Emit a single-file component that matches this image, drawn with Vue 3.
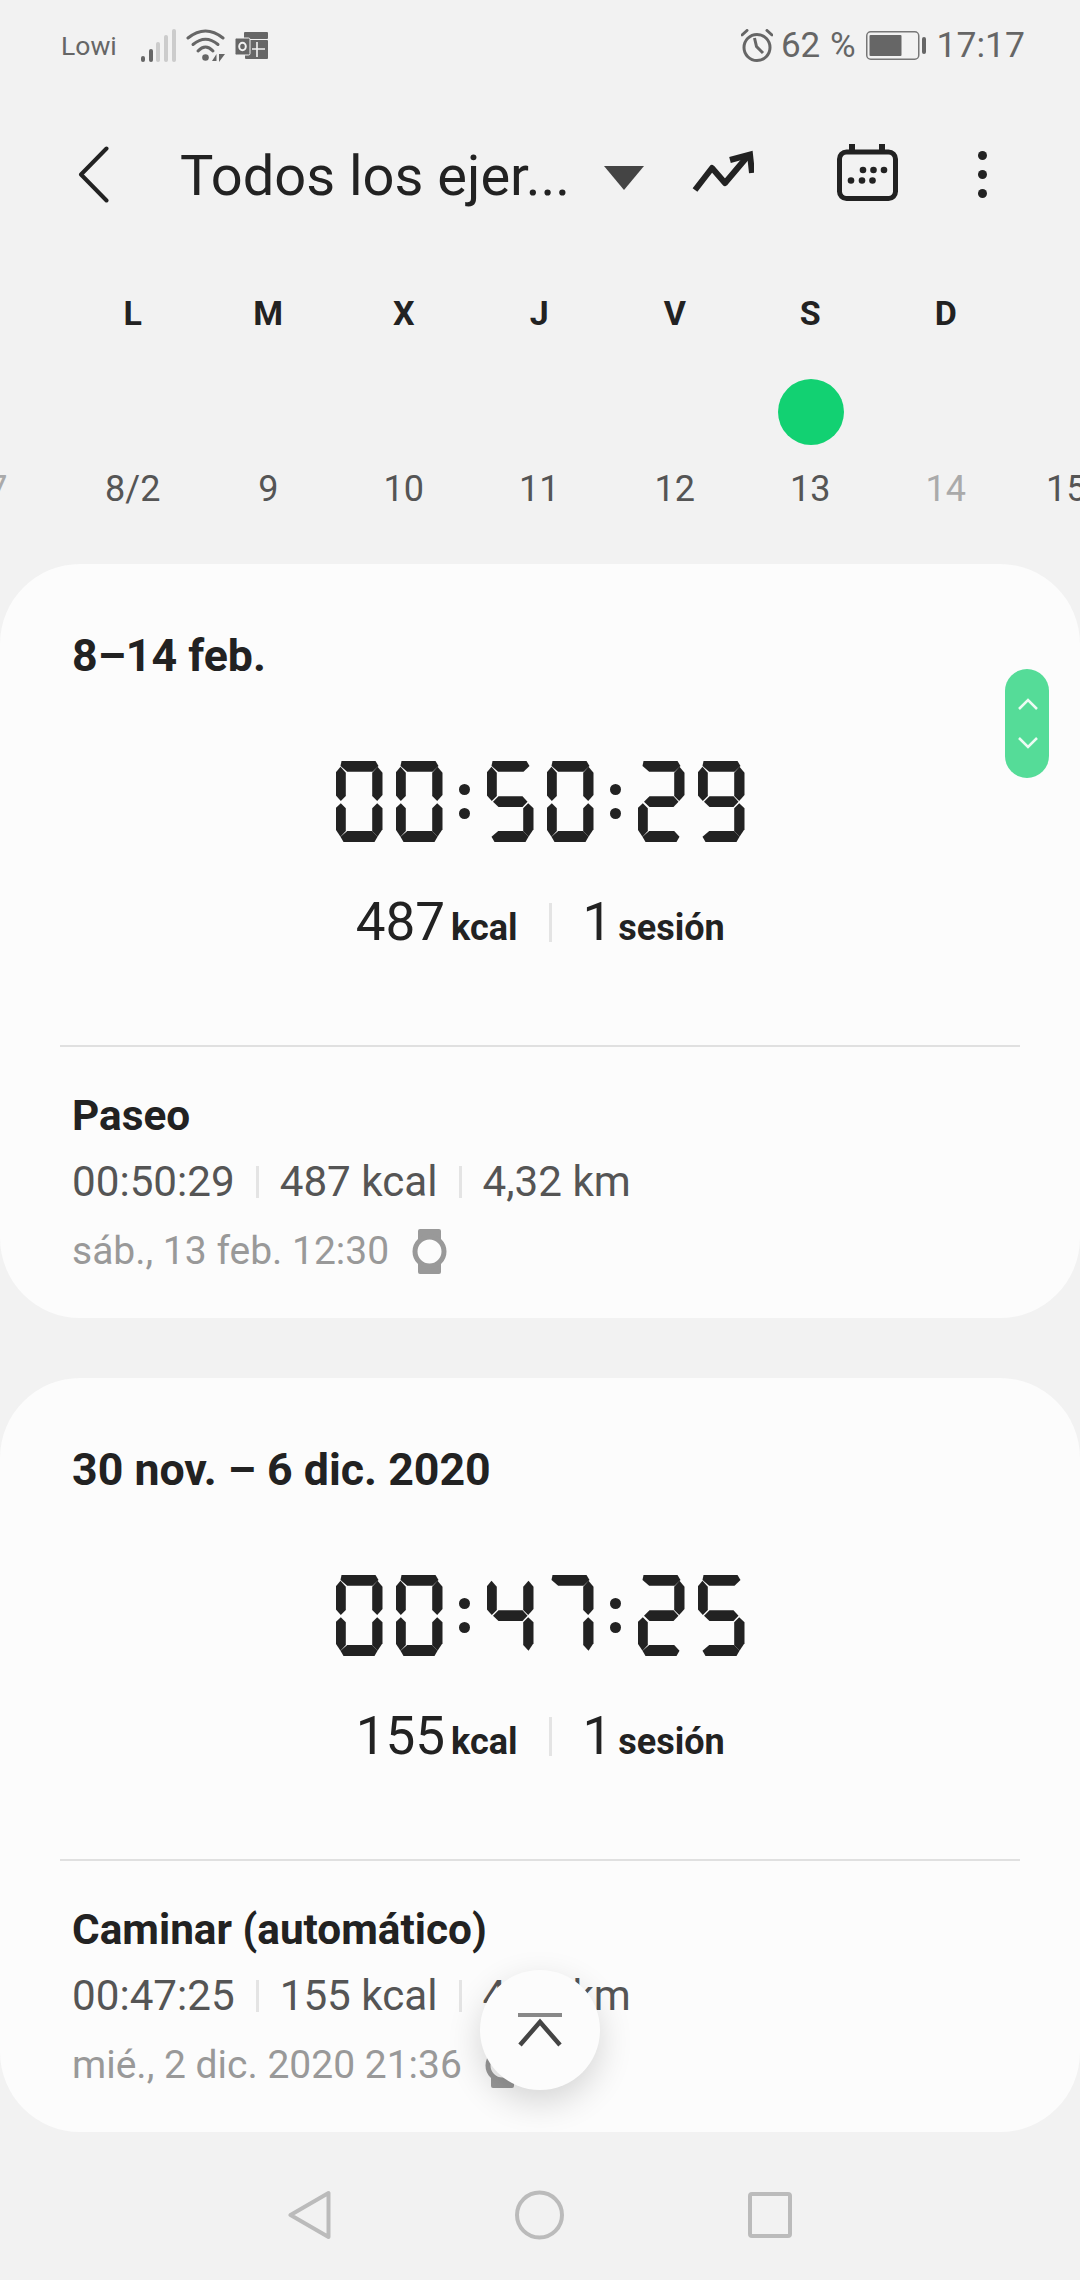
<script setup>
const weekDays = ['L', 'M', 'X', 'J', 'V', 'S', 'D']
const dates = [
  { label: '7', muted: true },
  { label: '8/2' },
  { label: '9' },
  { label: '10' },
  { label: '11' },
  { label: '12' },
  { label: '13' },
  { label: '14', muted: true },
  { label: '15' }
]

// which segments are lit for each digit of the clock
const segments = {
  0: 'abcdef',
  1: 'bc',
  2: 'abged',
  3: 'abgcd',
  4: 'fgbc',
  5: 'afgcd',
  6: 'afgedc',
  7: 'abc',
  8: 'abcdefg',
  9: 'abcdfg'
}

const cards = [
  {
    range: '8–14 feb.',
    time: '00:50:29',
    kcal: '487',
    sessions: '1',
    name: 'Paseo',
    distance: '4,32 km',
    date: 'sáb., 13 feb. 12:30'
  },
  {
    range: '30 nov. – 6 dic. 2020',
    time: '00:47:25',
    kcal: '155',
    sessions: '1',
    name: 'Caminar (automático)',
    distance: '4,07 km',
    date: 'mié., 2 dic. 2020 21:36'
  }
]
</script>

<template>
  <div class="screen">
    <div class="status-bar">
      <div class="status-left">
        <span class="carrier">Lowi</span>
        <svg class="ic-signal" width="35" height="33" viewBox="0 0 35 33">
          <rect x="0" y="27" width="4" height="6" rx="2" fill="#666" />
          <rect x="8" y="20" width="4" height="13" rx="2" fill="#666" />
          <rect x="15" y="13" width="4" height="20" rx="2" fill="#ccc" />
          <rect x="23" y="6" width="4" height="27" rx="2" fill="#ccc" />
          <rect x="31" y="0" width="4" height="33" rx="2" fill="#ccc" />
        </svg>
        <svg class="ic-wifi" width="40" height="33" viewBox="0 0 40 33">
          <g fill="none" stroke="#666" stroke-width="3" stroke-linecap="round">
            <path d="M2 9 Q19.5 -5 37 9" />
            <path d="M7 15.500 Q19.500 5 32 15.500" />
            <path d="M12 22 Q19.500 14 27 22" />
          </g>
          <circle cx="19.500" cy="28.500" r="3.300" fill="#666" />
          <path d="M26 32 L30.500 25 V32 Z M33 25 L39 25 L33 33 Z" fill="#666" />
        </svg>
        <svg class="ic-dual" width="33" height="27" viewBox="0 0 33 27">
          <rect x="9" y="0" width="24" height="7" rx="1" fill="#666" />
          <rect x="10" y="8" width="23" height="19" rx="1" fill="#666" />
          <rect x="0" y="6" width="15" height="17" rx="1.500" fill="#666" stroke="#f2f2f2" stroke-width="1" />
          <ellipse cx="7.500" cy="14.500" rx="3.300" ry="3.800" fill="none" stroke="#f2f2f2" stroke-width="2" />
          <path d="M17 17 H30 M22 10 V25" stroke="#f2f2f2" stroke-width="1.600" />
        </svg>
      </div>
      <div class="status-right">
        <svg width="32" height="33" viewBox="0 0 32 33">
          <circle cx="16" cy="18.500" r="13" fill="none" stroke="#666" stroke-width="3" />
          <path d="M13.500 9 L15.500 17.500 L22 24" fill="none" stroke="#666" stroke-width="3" />
          <path d="M1 6 L6 1.500 M26 1.500 L31 6" stroke="#666" stroke-width="3" stroke-linecap="round" />
        </svg>
        <span class="battery-pct">62 %</span>
        <svg class="ic-battery" width="60" height="29" viewBox="0 0 60 29">
          <rect x="0.750" y="0.750" width="52" height="27.500" rx="4" fill="none" stroke="#777" stroke-width="1.500" />
          <rect x="3.500" y="4" width="32" height="21" rx="1" fill="#666" />
          <rect x="56" y="6" width="4" height="17" rx="2" fill="#666" />
        </svg>
        <span class="clock">17:17</span>
      </div>
    </div>

    <header class="top-bar">
      <svg class="ic-back" width="31" height="57" viewBox="0 0 31 57">
        <path d="M28.500 2.500 L3 28.500 L28.500 54.500" fill="none" stroke="#222" stroke-width="4" stroke-linecap="round" stroke-linejoin="round" />
      </svg>
      <h1 class="title">Todos los ejer...</h1>
      <svg class="ic-caret" width="40" height="24" viewBox="0 0 40 24">
        <path d="M0 0 H40 L20 24 Z" fill="#444" />
      </svg>
      <svg class="ic-trend" width="62" height="43" viewBox="0 0 62 43">
        <path d="M3 40 L20 18 L33 33 L55 7" fill="none" stroke="#222" stroke-width="6" stroke-linejoin="round" />
        <path d="M38 10 L58 4.500 L60 23" fill="none" stroke="#222" stroke-width="6" />
      </svg>
      <svg class="ic-calendar" width="61" height="57" viewBox="0 0 61 57">
        <rect x="2.500" y="8" width="56" height="46.500" rx="7" fill="none" stroke="#222" stroke-width="5" />
        <rect x="12" y="0" width="6" height="8" fill="#222" />
        <rect x="42" y="0" width="6" height="8" fill="#222" />
        <g fill="#222">
          <circle cx="26" cy="26" r="3.300" />
          <circle cx="36.500" cy="26" r="3.300" />
          <circle cx="47" cy="26" r="3.300" />
          <circle cx="14" cy="36.500" r="3.300" />
          <circle cx="25" cy="36.500" r="3.300" />
          <circle cx="35.500" cy="36.500" r="3.300" />
        </g>
      </svg>
      <div class="kebab">
        <span></span>
        <span></span>
        <span></span>
      </div>
    </header>

    <section class="week">
      <div class="week-row">
        <span v-for="d in weekDays" :key="d" class="week-day">{{ d }}</span>
      </div>
      <div class="week-row marks">
        <span v-for="d in weekDays" :key="d" class="mark-cell">
          <i v-if="d === 'S'" class="mark"></i>
        </span>
      </div>
      <div class="dates-row">
        <span
          v-for="d in dates"
          :key="d.label"
          class="date"
          :class="{ muted: d.muted }"
        >{{ d.label }}</span>
      </div>
    </section>

    <article v-for="card in cards" :key="card.range" class="card">
      <h2 class="range">{{ card.range }}</h2>

      <div class="timer" role="img" :aria-label="card.time">
        <template v-for="(ch, i) in card.time" :key="i">
          <span v-if="ch === ':'" class="colon"><i></i><i></i></span>
          <span v-else class="digit">
            <i v-for="s in segments[ch]" :key="s" class="seg" :class="'seg-' + s"></i>
          </span>
        </template>
      </div>

      <div class="totals">
        <div class="total-left">
          <span class="big">{{ card.kcal }}</span>
          <span class="unit">kcal</span>
        </div>
        <i class="totals-sep"></i>
        <div class="total-right">
          <span class="big">{{ card.sessions }}</span>
          <span class="unit">sesión</span>
        </div>
      </div>

      <hr class="divider" />

      <div class="entry">
        <div class="entry-name">{{ card.name }}</div>
        <div class="entry-stats">
          <span>{{ card.time }}</span>
          <i class="stat-sep"></i>
          <span>{{ card.kcal }} kcal</span>
          <i class="stat-sep"></i>
          <span>{{ card.distance }}</span>
        </div>
        <div class="entry-date">
          <span>{{ card.date }}</span>
          <svg width="35" height="45" viewBox="0 0 35 45">
            <path d="M6 2 Q6 0 8 0 H27 Q29 0 29 2 V11 H6 Z M6 34 H29 V43 Q29 45 27 45 H8 Q6 45 6 43 Z" fill="#999" />
            <circle cx="17.500" cy="22.500" r="14.500" fill="#fcfcfc" stroke="#999" stroke-width="5" />
          </svg>
        </div>
      </div>
    </article>

    <nav class="nav-bar">
      <svg width="43" height="50" viewBox="0 0 43 50">
        <path d="M40.500 3 V47 L2.500 25 Z" fill="none" stroke="#bbb" stroke-width="4" stroke-linejoin="round" />
      </svg>
      <svg width="49" height="50" viewBox="0 0 49 50">
        <circle cx="24.500" cy="25" r="22.500" fill="none" stroke="#bbb" stroke-width="4" />
      </svg>
      <svg width="44" height="46" viewBox="0 0 44 46">
        <rect x="2" y="2" width="40" height="42" rx="2" fill="none" stroke="#bbb" stroke-width="4" />
      </svg>
    </nav>

    <div class="scroll-pill">
      <svg width="44" height="109" viewBox="0 0 44 109">
        <path d="M14 40 L23 31 L32 40 M14 69 L23 78 L32 69" fill="none" stroke="#ecfbf3" stroke-width="2.500" />
      </svg>
    </div>

    <button class="to-top" type="button" aria-label="Subir">
      <svg width="44" height="34" viewBox="0 0 44 34">
        <rect x="0" y="0" width="44" height="4" fill="#888" />
        <path d="M2 32 L22 9 L42 32" fill="none" stroke="#444" stroke-width="4.500" />
      </svg>
    </button>
  </div>
</template>

<style>
html,
body {
  margin: 0;
  background: #f2f2f2;
}
</style>

<style scoped>
.screen {
  position: relative;
  width: 1080px;
  height: 2280px;
  overflow: hidden;
  background: #f2f2f2;
  font-family: Roboto, 'Noto Sans', sans-serif;
  color: #222;
}

.status-bar {
  display: flex;
  justify-content: space-between;
  align-items: center;
  height: 90px;
  padding: 0 55px 0 61px;
  box-sizing: border-box;
  color: #666;
}

.status-left,
.status-right {
  display: flex;
  align-items: center;
}

.carrier {
  width: 80px;
  font-size: 26.5px;
}

.ic-wifi {
  margin-left: 10px;
}

.ic-dual {
  margin-left: 9px;
}

.battery-pct {
  margin-left: 8px;
  font-size: 35px;
  word-spacing: 1px;
}

.ic-battery {
  margin-left: 10px;
}

.clock {
  margin-left: 11px;
  font-size: 35.5px;
}

.top-bar {
  display: flex;
  align-items: center;
  height: 168px;
  padding-left: 78px;
}

.title {
  width: 390px;
  margin: 3px 0 0 71px;
  font-size: 56px;
  font-weight: 400;
  white-space: nowrap;
}

.ic-caret {
  margin: 8px 0 0 34px;
}

.ic-trend {
  margin: -6px 0 0 48px;
}

.ic-calendar {
  margin: -3px 0 0 83px;
}

.kebab {
  display: flex;
  flex-direction: column;
  gap: 10px;
  margin-left: 80px;
}

.kebab span {
  width: 9px;
  height: 9px;
  border-radius: 50%;
  background: #222;
}

.week {
  height: 306px;
  overflow: hidden;
}

.week-row {
  display: grid;
  grid-template-columns: repeat(7, 135.5px);
  padding-left: 65px;
  height: 110px;
  align-items: center;
}

.week-day {
  text-align: center;
  font-size: 34px;
  font-weight: 700;
}

.marks {
  height: 84px;
}

.mark-cell {
  display: flex;
  justify-content: center;
  padding: 4px 0 0 2px;
}

.mark {
  display: block;
  width: 66px;
  height: 66px;
  border-radius: 50%;
  background: #12d172;
}

.dates-row {
  display: grid;
  grid-template-columns: repeat(8, 135.5px) 105.5px;
  margin-left: -70.5px;
  padding-top: 2px;
  height: 70px;
  align-items: center;
}

.date {
  text-align: center;
  font-size: 36px;
  color: #555;
}

.date.muted {
  color: #aaa;
}

.card {
  padding-bottom: 42px;
  border-radius: 80px;
  background: #fcfcfc;
}

.card + .card {
  margin-top: 60px;
}

.range {
  margin: 0;
  padding: 64px 0 0 72px;
  font-size: 44.7px;
  line-height: 56px;
  font-weight: 700;
}

.timer {
  display: flex;
  justify-content: center;
  margin-top: 77px;
}

.digit {
  display: grid;
  width: 47px;
  height: 81px;
}

.digit + .digit {
  margin-left: 13px;
}

.seg {
  grid-area: 1 / 1;
  background: #222;
}

.seg-a {
  clip-path: polygon(6px 0, 40px 0, 43px 5px, 37px 10.7px, 11.7px 10.7px, 5px 5px);
}

.seg-b {
  clip-path: polygon(42px 5.7px, 47px 11.7px, 47px 34px, 41.7px 40px, 36.7px 35px, 36.7px 11.7px);
}

.seg-c {
  clip-path: polygon(41.7px 42.3px, 47px 47.3px, 47px 68.3px, 42px 75.7px, 36.7px 70px, 36.7px 47.3px);
}

.seg-d {
  clip-path: polygon(11.7px 70px, 36.7px 70px, 42px 75.7px, 39px 81px, 8px 81px, 5px 75.7px);
}

.seg-e {
  clip-path: polygon(5.3px 42.3px, 0 47.3px, 0 68.3px, 5px 75.7px, 10.3px 70px, 10.3px 47.3px);
}

.seg-f {
  clip-path: polygon(5px 5.7px, 0 11.7px, 0 34px, 5.3px 40px, 10.3px 35px, 10.3px 11.7px);
}

.seg-g {
  clip-path: polygon(12px 35.3px, 36px 35.3px, 41px 40.7px, 36px 46px, 12px 46px, 6.5px 40.7px);
}

.colon {
  display: flex;
  flex-direction: column;
  align-items: center;
  gap: 13px;
  width: 44px;
  padding-top: 23px;
}

.colon i {
  width: 11px;
  height: 11px;
  border-radius: 50%;
  background: #222;
}

.totals {
  display: grid;
  grid-template-columns: 1fr auto 1fr;
  align-items: center;
  column-gap: 31px;
  margin-top: 48px;
  padding-left: 20px;
  height: 64px;
}

.total-left {
  text-align: right;
}

.big {
  font-size: 53px;
  line-height: 64px;
}

.unit {
  margin-left: 6px;
  font-size: 36px;
  font-weight: 700;
}

.totals-sep {
  width: 3px;
  height: 39px;
  background: #e4e4e4;
}

.divider {
  height: 2px;
  margin: 91px 60px 0;
  border: 0;
  background: #e0e0e0;
}

.entry {
  margin-top: 41px;
  padding-left: 72px;
}

.entry-name {
  font-size: 42.3px;
  line-height: 56px;
  font-weight: 700;
}

.entry-stats {
  display: flex;
  align-items: center;
  gap: 21px;
  margin-top: 13px;
  font-size: 42.2px;
  line-height: 50px;
  color: #555;
}

.stat-sep {
  width: 3px;
  height: 32px;
  background: #e4e4e4;
}

.entry-date {
  display: flex;
  align-items: center;
  gap: 23px;
  margin-top: 19px;
  font-size: 39px;
  line-height: 50px;
  color: #999;
}

.nav-bar {
  display: flex;
  justify-content: center;
  align-items: center;
  gap: 184px;
  margin-top: 58px;
}

.scroll-pill {
  position: absolute;
  top: 669px;
  left: 1005px;
  width: 44px;
  height: 109px;
  border-radius: 22px;
  background: #55dc98;
}

.scroll-pill svg {
  display: block;
}

.to-top {
  position: absolute;
  top: 1970px;
  left: 480px;
  display: flex;
  justify-content: center;
  align-items: center;
  width: 120px;
  height: 120px;
  padding: 0;
  border: 0;
  border-radius: 50%;
  background: #fcfcfc;
  box-shadow: 0 12px 34px rgba(0, 0, 0, 0.16);
}
</style>
